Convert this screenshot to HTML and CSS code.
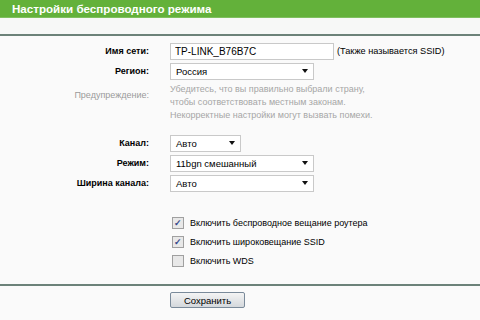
FILE: index.html
```html
<!DOCTYPE html>
<html>
<head>
    <title>Настройки беспроводного режима</title>
    <meta charset="UTF-8">
    <link rel="stylesheet" href="styles.css">
</head>
<body>
    <div class="header">Настройки беспроводного режима</div>
    <div class="band"></div>
    <div class="form">
        <div class="row">
            <label class="name">Имя сети:</label>
            <div class="field"><input type="text" class="ssid" value="TP-LINK_B76B7C"><span class="note">(Также называется SSID)</span></div>
        </div>
        <div class="row">
            <label class="name">Регион:</label>
            <div class="field"><div class="select wide"><span>Россия</span><i class="arrow"></i></div></div>
        </div>
        <div class="row warn">
            <label class="name grey">Предупреждение:</label>
            <div class="field hint">Убедитесь, что вы правильно выбрали страну,<br>чтобы соответствовать местным законам.<br>Некорректные настройки могут вызвать помехи.</div>
        </div>
        <div class="row gap">
            <label class="name">Канал:</label>
            <div class="field"><div class="select narrow"><span>Авто</span><i class="arrow"></i></div></div>
        </div>
        <div class="row">
            <label class="name">Режим:</label>
            <div class="field"><div class="select wide"><span>11bgn смешанный</span><i class="arrow"></i></div></div>
        </div>
        <div class="row">
            <label class="name">Ширина канала:</label>
            <div class="field"><div class="select wide"><span>Авто</span><i class="arrow"></i></div></div>
        </div>
        <div class="checks">
            <label class="check"><span class="box on">✓</span>Включить беспроводное вещание роутера</label>
            <label class="check"><span class="box on">✓</span>Включить широковещание SSID</label>
            <label class="check"><span class="box"></span>Включить WDS</label>
        </div>
    </div>
    <div class="footer">
        <button>Сохранить</button>
    </div>
</body>
</html>
```

FILE: styles.css
```css
body { margin: 0; width: 480px; height: 320px; overflow: hidden; background: #fafafa; font-family: "Liberation Sans", Arial, sans-serif; font-size: 9px; color: #000; }
.header { height: 17px; background: #63b13a; color: #fff; font-weight: bold; font-size: 11.6px; line-height: 17px; padding-left: 12px; border-bottom: 1px solid #7fbf5f; }
.band { height: 16px; background: #f7f8f7; border-bottom: 2px solid #6c8279; }
.form { padding-top: 5px; height: 250px; border-bottom: 2px solid #6c8279; box-sizing: border-box; }
.row { display: flex; align-items: center; min-height: 20px; }
.row.warn { align-items: flex-start; margin-top: 2px; }
.row.warn .name { margin-top: 7px; }
.row.gap { margin-top: 11px; }
.name { width: 149px; text-align: right; font-weight: bold; flex-shrink: 0; }
.name.grey { color: #9a9a9a; font-weight: normal; }
.field { margin-left: 21px; display: flex; align-items: center; }
.ssid { width: 164px; height: 17px; box-sizing: border-box; border: 1px solid #c9c9c9; background: #fff; font: 10px "Liberation Sans", Arial, sans-serif; padding: 0 4px; margin: 0; }
.note { margin-left: 3px; font-size: 9.2px; }
.select { height: 17px; box-sizing: border-box; border: 1px solid #c9c9c9; background: #fff; display: flex; align-items: center; justify-content: space-between; padding: 0 5px; font-size: 9.5px; }
.select.wide { width: 144px; }
.select.narrow { width: 71px; }
.arrow { width: 0; height: 0; border-left: 3px solid transparent; border-right: 3px solid transparent; border-top: 4px solid #111; }
.hint { display: block; color: #a6a6a6; line-height: 13px; }
.checks { margin-top: 23px; padding-left: 172px; display: flex; flex-direction: column; gap: 6px; }
.check { display: flex; align-items: center; height: 13px; }
.box { width: 10px; height: 10px; border: 1px solid #a0a0a0; background: #e8e8e8; margin-right: 6px; font-size: 9px; line-height: 10px; text-align: center; color: #33478a; font-weight: bold; }
.footer { padding: 6px 0 0 170px; }
button { width: 75px; height: 16px; padding: 0; font: 9.5px "Liberation Sans", Arial, sans-serif; color: #000; background: linear-gradient(#f4f4f4, #d4d8dc); border: 1px solid #7a8a9a; border-radius: 2px; }
```
